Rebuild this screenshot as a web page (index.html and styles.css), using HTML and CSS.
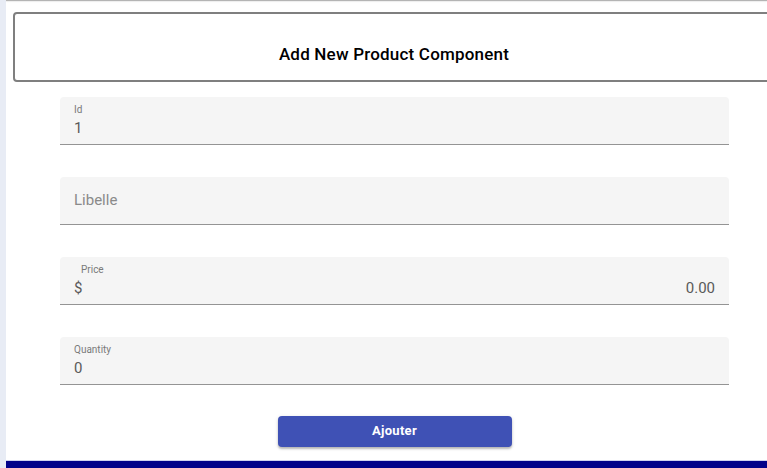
FILE: index.html
```html
<!DOCTYPE html>
<html lang="fr">
<head>
<meta charset="utf-8">
<title>Add New Product Component</title>
<link rel="stylesheet" href="styles.css">
</head>
<body>
<div class="app">
  <aside class="side"></aside>
  <main class="main">
    <div class="topline"></div>
    <header class="title-card">
      <h1>Add New Product Component</h1>
    </header>
    <form class="form">
      <div class="field">
        <span class="label">Id</span>
        <span class="value">1</span>
      </div>
      <div class="field field-empty">
        <span class="placeholder">Libelle</span>
      </div>
      <div class="field">
        <span class="label label-indent">Price</span>
        <span class="value row"><span>$</span><span>0.00</span></span>
      </div>
      <div class="field">
        <span class="label">Quantity</span>
        <span class="value">0</span>
      </div>
      <div class="actions">
        <button type="button" class="btn">Ajouter</button>
      </div>
    </form>
    <div class="footer-bar"></div>
  </main>
</div>
</body>
</html>
```
FILE: styles.css
```css
html, body {
  margin: 0;
  padding: 0;
  width: 767px;
  height: 468px;
  overflow: hidden;
  background: #fff;
  font-family: Roboto, "Liberation Sans", sans-serif;
}
.app {
  display: flex;
  height: 468px;
}
.side {
  width: 6px;
  flex: none;
  background: #e8ecf5;
}
.main {
  flex: 1;
  display: flex;
  flex-direction: column;
  min-width: 0;
}
.topline {
  height: 1px;
  background: #b4b4b4;
  box-shadow: 0 1px 1px rgba(0,0,0,0.08);
}
.title-card {
  margin: 11px -20px 0 7px;
  height: 66px;
  box-sizing: content-box;
  border: 2px solid #7f7f7f;
  border-radius: 4px;
  display: flex;
  align-items: center;
  justify-content: center;
  padding-right: 6px;
}
.title-card h1 {
  margin: 0;
  font-size: 17px;
  font-weight: 500;
  color: #000;
  letter-spacing: 0.2px;
  position: relative;
  left: -3px;
  top: 7px;
}
.form {
  margin: 15px 0 0 54px;
  width: 669px;
  display: flex;
  flex-direction: column;
  gap: 32px;
}
.field {
  box-sizing: border-box;
  height: 48px;
  background: #f5f5f5;
  border-bottom: 1px solid #949494;
  border-radius: 4px 4px 0 0;
  padding: 7px 14px 0;
  display: flex;
  flex-direction: column;
}
.field-empty {
  padding-top: 0;
  padding-bottom: 2px;
  justify-content: center;
}
.label {
  font-size: 10px;
  color: #7a7a7a;
  line-height: 12px;
}
.label-indent {
  padding-left: 7px;
}
.value {
  font-size: 15px;
  color: #5a5a5a;
  line-height: 20px;
  margin-top: 2px;
}
.row {
  display: flex;
  justify-content: space-between;
}
.placeholder {
  font-size: 15px;
  color: #8a8a8a;
  line-height: 20px;
}
.actions {
  display: flex;
  justify-content: center;
  margin-top: -1px;
}
.btn {
  width: 234px;
  height: 31px;
  border: none;
  border-radius: 4px;
  background: #3f51b5;
  color: #fff;
  font-family: Roboto, "Liberation Sans", sans-serif;
  font-size: 13px;
  font-weight: 700;
  letter-spacing: 0.3px;
  padding-bottom: 4px;
  box-shadow: 0 2px 2px rgba(0,0,0,0.22), 0 1px 4px rgba(0,0,0,0.12);
}
.footer-bar {
  margin-top: auto;
  height: 7px;
  background: #02028a;
  border-top: 1px solid #cfd2ee;
}
```
